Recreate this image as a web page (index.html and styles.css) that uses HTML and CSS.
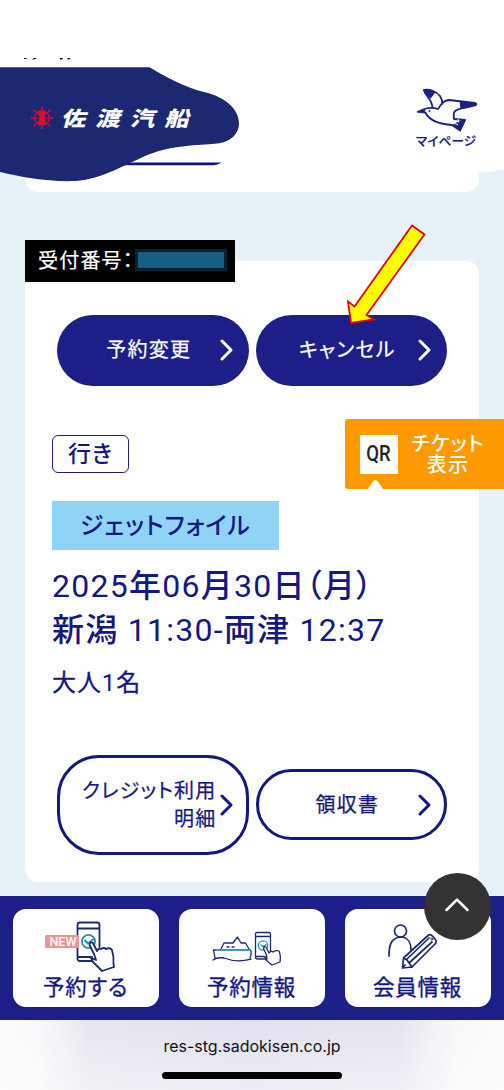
FILE: index.html
```html
<!DOCTYPE html>
<html lang="ja">
<head>
<meta charset="utf-8">
<title>佐渡汽船 予約情報</title>
<link rel="stylesheet" href="styles.css">
</head>
<body>
<div class="page">
  <header class="header">
    <div class="prev-card"></div>
    <svg class="wave" width="504" height="200" viewBox="0 0 504 200">
      <path d="M0 0H504V169.500C495 171 487 172 479 173H0Z" fill="#fff"/>
      <path d="M24 58h3l-1 1h-2zM34 58h3l-3 1.500h-2zM60 58h3l-1 1.500h-2zM67 58h4l-2 1.500h-1z" fill="#111"/>
      <path d="M118 162.400H221.500Q217 165.300 210 165.300H118Z" fill="#101583"/>
      <path d="M0 67.300H149.500C168 78 184 87 204 92C226 97 239 110 239 123C239 135 229 142.500 217 143.500C196 145.500 174 145 150 154C127 163 104 179 75 181C48 182 21 177 0 172Z" fill="#1d2872"/>
    </svg>
    <div class="logo">
      <svg width="22" height="22" viewBox="0 0 22 22" fill="none" stroke="#e5082e">
        <circle cx="11" cy="11" r="7.300" stroke-width="1.300"/>
        <path d="M11 0V22M0 11H22M3.300 3.300L18.700 18.700M18.700 3.300L3.300 18.700" stroke-width=".8"/>
        <path d="M7 4.500H15L13 11L15 17.500H7L9 11Z" fill="#e5082e" stroke-width=".6"/>
        <path d="M3 3l1.500 1.500M17.500 4.500l1.500-1.500M3 19l1.500-1.500M17.500 17.500l1.500 1.500M11 0v2M11 20v2M0 11h2M20 11h2" stroke-width="1.700"/>
      </svg>
      <span class="logo-text">佐渡汽船</span>
    </div>
    <a class="mypage">
      <svg width="62" height="44" viewBox="0 0 62 44" fill="none" stroke="#1c1f87" stroke-width="1.800" stroke-linejoin="round">
        <path d="M10 20.500C14 19.500 18 19.500 22 21C26 15 28 12.500 33 12L59 15C61 15.500 60.500 17 59 17.500C50 20 42 20 39 23C37.500 25 37.500 28 38 31L49 32L44 42.500L36 37C25 36 14 34 9 24"/>
        <path d="M16.500 19.500C16 11 8.500 7 8 2C13 1 20 3 24 8C26 11 26.500 14 26.500 16.500"/>
        <path d="M8 2C12 1 17 2 19 4L14.500 10C11 7 8.500 5 8 2ZM44 13.500L60 15.500C60.500 17 53 19 45 20ZM1 24C4 22 7 21 10 20.500C8.500 22 8.500 23 9 25ZM44 33L49 32L44 42L37 37Z" fill="#1c1f87" stroke-width="1"/>
        <path d="M39 33l4 1M38 35.500l4 1M42 31l1 3" stroke="#fff" stroke-width="1"/>
        <circle cx="13.500" cy="23" r="1" fill="#1c1f87" stroke="none"/>
      </svg>
      <span>マイページ</span>
    </a>
  </header>

  <main class="main">
    <section class="card">
      <div class="receipt"><span>受付番号：</span><i class="mask"></i></div>
      <div class="row row-top">
        <a class="btn solid"><span>予約変更</span><svg class="chev" width="13" height="22" viewBox="0 0 13 22"><path d="M2 2L11 11L2 20"/></svg></a>
        <a class="btn solid"><span>キャンセル</span><svg class="chev" width="13" height="22" viewBox="0 0 13 22"><path d="M2 2L11 11L2 20"/></svg></a>
      </div>
      <div class="direction">行き</div>
      <div class="ship">ジェットフォイル</div>
      <div class="trip">
        <p>2025<b>年</b>06<b>月</b>30<b>日（月）</b></p>
        <p><b>新潟</b> 11:30-<b>両津</b> 12:37</p>
      </div>
      <p class="people"><b>大人</b>1<b>名</b></p>
      <div class="row row-bottom">
        <a class="btn line tall"><span>クレジット利用<br>明細</span><svg class="chev" width="13" height="22" viewBox="0 0 13 22"><path d="M2 2L11 11L2 20"/></svg></a>
        <a class="btn line"><span>領収書</span><svg class="chev" width="13" height="22" viewBox="0 0 13 22"><path d="M2 2L11 11L2 20"/></svg></a>
      </div>
    </section>
  </main>

  <nav class="nav">
    <a class="tab">
      <svg width="146" height="52" viewBox="0 0 146 52" fill="none" stroke="#1c2b6c" stroke-width="1.800" stroke-linejoin="round" stroke-linecap="round">
        <path d="M64.500 38V16Q64.500 13.500 67 13.500H84Q86.500 13.500 86.500 16V38M64.500 19.500H86.500M64.500 27V49.500Q64.500 52 67 52H80M64.500 48H79"/>
        <circle cx="75.500" cy="32.500" r="6.600" stroke="#2492b5"/>
        <path d="M72 31.500l3 3 5-4" stroke="#2492b5" stroke-width="2"/>
        <path d="M83 51L81 45L76.500 36Q77 32 80 34L84 42Q85 39 88 40Q91 38 93 40Q97 38 99 41Q101 47 100.500 55L101 58L89 62L80 53L78 49Z" fill="#fff"/>
        <rect x="32" y="26" width="34" height="13" rx="1.500" fill="#ee9496" stroke="none"/>
        <text x="36.500" y="37" class="new">NEW</text>
      </svg>
      <span>予約する</span>
    </a>
    <a class="tab">
      <svg width="146" height="52" viewBox="0 0 146 52" fill="none" stroke="#1c2b6c" stroke-width="1.300" stroke-linejoin="round" stroke-linecap="round">
        <path d="M34 51Q38 48 45 49Q58 54 72 50M36 49L34.500 41H71.500Q73 44 71 49M42 40L45 34H54L58.500 28L62 34H66.500L70 40M48 38h2M53 38h2"/>
        <path d="M37 41H71" stroke="#35afd2"/>
        <path d="M76.500 43V25Q76.500 23.500 78 23.500H90Q91.500 23.500 91.500 25V43M76.500 27.500H91.500M76.500 42V48Q76.500 50 78.500 50H87M76.500 47.500H86"/>
        <circle cx="84" cy="36.500" r="4.700" stroke="#2492b5"/><path d="M82 36l2 1.500 3-2" stroke="#2492b5"/>
        <path d="M88 50L87.500 46L84.500 39.500Q85 37 87 38L90 44Q92 41 94 43Q97 41 100 42Q102 46 101 53L93 56L87 51L86 48Z" fill="#fff"/>
      </svg>
      <span>予約情報</span>
    </a>
    <a class="tab">
      <svg width="146" height="52" viewBox="0 0 146 52" fill="none" stroke="#1c2b6c" stroke-width="1.700" stroke-linejoin="round" stroke-linecap="round">
        <circle cx="55.500" cy="22" r="6"/>
        <path d="M44 47C44 36 46 29 55.500 28C63 28 66 34 66 41"/>
        <path d="M57.500 59L58.500 49L83 26.500Q85 24.500 88 27.500L90 30Q92.500 33 90 35L67 58ZM58.500 49L62 51L64 54L67 58M61.500 50.500L84 29M64 54L87 33M57.500 59L60 56" fill="#fff"/>
        <circle cx="86.800" cy="30" r="1" stroke-width="1"/>
      </svg>
      <span>会員情報</span>
    </a>
  </nav>

  <footer class="browser">
    <div class="url">res-stg.sadokisen.co.jp</div>
    <div class="home"></div>
  </footer>

  <a class="qr">
    <span class="qr-box"><span>QR</span></span>
    <span class="qr-text">チケット<br>表示</span>
    <svg class="qr-notch" width="15" height="9" viewBox="0 0 15 9"><path d="M0 9L5 1.500Q7.500-1 10 1.500L15 9Z" fill="#fff"/></svg>
  </a>
  <svg class="arrow" width="84" height="106" viewBox="0 0 84 106"><path d="M67 5.500L79.500 14.500L21.500 95L29 99.500L6 103L3 81.500L9.500 86.500Z" fill="#ff0" stroke="#e60012" stroke-width="1.800"/></svg>
  <a class="to-top"><svg width="24" height="14" viewBox="0 0 24 14"><path d="M1.500 12L12 1.700L22.500 12" fill="none" stroke="#fff" stroke-width="2.500" stroke-linecap="round" stroke-linejoin="round"/></svg></a>
</div>
</body>
</html>
```

FILE: styles.css
```css
* { box-sizing: border-box; }
body { margin: 0; }
p { margin: 0; }
b { font-weight: 500; }
.page {
  position: relative;
  display: flex;
  flex-direction: column;
  width: 504px;
  height: 1090px;
  overflow: hidden;
  background: #e7f2f8;
  color: #151883;
  font-family: Roboto, "Noto Sans CJK JP", sans-serif;
  font-feature-settings: "palt";
}
.header {
  position: relative;
  display: flex;
  justify-content: space-between;
  align-items: flex-start;
  height: 192px;
  padding: 88px 26px 0 31px;
}
.prev-card {
  position: absolute;
  left: 25px;
  bottom: 0;
  width: 454px;
  height: 100px;
  background: #fff;
  border-radius: 0 0 13px 13px;
}
.wave { position: absolute; left: 0; top: 0; }
.logo { position: relative; display: flex; align-items: center; gap: 10px; padding-top: 19px; }
.logo-text {
  color: #fff;
  font: 900 21px/22px "Noto Sans CJK JP", sans-serif;
  letter-spacing: 8.500px;
  margin-top: -3px;
  transform: scale(1.17, .98) skewX(-12deg);
  transform-origin: 0 50%;
}
.mypage { position: relative; display: flex; flex-direction: column; width: 62px; font-size: 12.500px; font-weight: 500; line-height: 18px; letter-spacing: .2px; white-space: nowrap; -webkit-text-stroke: .2px; }
.mypage span { margin-top: 1px; }
.main { height: 704px; padding: 69px 25px 0; }
.card {
  position: relative;
  height: 621px;
  padding: 53.500px 31px 0 27px;
  background: #fff;
  border-radius: 0 13px 13px 13px;
}
.receipt {
  position: absolute;
  left: 0;
  top: -21px;
  display: flex;
  align-items: center;
  width: 210px;
  height: 42px;
  padding-left: 13px;
  background: #000;
  color: #fff;
  font-size: 20px;
  letter-spacing: 1.200px;
  -webkit-text-stroke: .2px;
}
.receipt span { width: 97px; white-space: nowrap; line-height: 30px; }
.mask { width: 92px; height: 22px; margin-top: -3px; background: #156082; border: 3px solid #042433; }
.row { display: flex; align-items: center; gap: 7px; padding-left: 5px; }
.btn {
  display: flex;
  align-items: center;
  width: 191.500px;
  height: 71px;
  flex: none;
  padding-right: 16px;
  border-radius: 36px;
  font-size: 20px;
  line-height: 28px;
  letter-spacing: 1.200px;
  text-align: center;
  -webkit-text-stroke: .25px;
}
.btn span { flex: 1; padding-left: 8px; margin-right: -13px; }
.solid { background: #1c1f87; color: #fff; }
.line { border: 3px solid #151883; padding-right: 13px; }
.line span { padding-left: 5px; }
.tall { height: 99.500px; border-radius: 42px; }
.tall span { padding: 0; margin: 0 3px 0 0; text-align: right; white-space: nowrap; }
.btn .chev { flex: none; fill: none; stroke: currentColor; stroke-width: 3; stroke-linecap: round; stroke-linejoin: round; }
.direction {
  width: 77px;
  height: 38px;
  margin-top: 49.500px;
  border: 1.500px solid #1c1f87;
  border-radius: 6px;
  font-size: 23px;
  font-weight: 500;
  line-height: 38px;
  letter-spacing: 1px;
  text-align: center;
}
.ship {
  width: 227px;
  height: 49px;
  margin-top: 28px;
  background: #90d4f5;
  font-size: 24px;
  font-weight: 500;
  line-height: 51px;
  letter-spacing: 1px;
  text-align: center;
}
.trip { margin-top: 14px; font-size: 32px; line-height: 44px; letter-spacing: 1.250px; white-space: nowrap; }
.people { margin-top: 14px; font-size: 24px; line-height: 34px; letter-spacing: .9px; }
.people b { font-weight: 400; -webkit-text-stroke: .3px; }
.row-bottom { margin-top: 55px; }
.nav { display: flex; gap: 20px; height: 124px; padding: 13px; background: #1c1f87; }
.tab {
  display: flex;
  flex-direction: column;
  align-items: center;
  width: 146px;
  height: 98px;
  border-radius: 13px;
  background: #fff;
  font-size: 21.500px;
  letter-spacing: .8px;
}
.tab svg { flex: none; overflow: visible; }
.tab span { margin-top: 11px; line-height: 32px; margin-right: 1px; -webkit-text-stroke: .35px; }
.new { font: 500 12.500px Roboto, sans-serif; letter-spacing: 0; fill: #fff; stroke: none; }
.browser {
  display: flex;
  flex-direction: column;
  align-items: center;
  height: 70px;
  background:
    linear-gradient(180deg, rgba(255,255,255,0) 0, rgba(255,255,255,.4) 100%),
    linear-gradient(90deg, #fbfcfd 0, #f8f8fb 40px, #e6e6f0 90px, #e1e1ee 250px, #e5e5f0 400px, #f8f8fb 455px, #fbfbfd 504px);
}
.url { margin-top: 16px; color: #111; font: 16px/20px Inter, sans-serif; letter-spacing: 0; }
.home { width: 180px; height: 7px; margin-top: auto; margin-bottom: 11px; border-radius: 4px; background: #000; }
.qr {
  position: absolute;
  left: 345px;
  top: 419px;
  display: flex;
  align-items: center;
  gap: 11px;
  width: 159px;
  height: 70px;
  padding-left: 15px;
  background: #f90;
  border-radius: 3px 0 0 3px;
  color: #fff;
}
.qr-box { display: grid; place-items: center; width: 38px; height: 39px; background: #fff; color: #222; font: 500 22px/24px Roboto, sans-serif; }
.qr-box span { transform: scaleX(.84); }
.qr-text { width: 78px; padding-top: 2px; text-align: center; font-size: 20px; font-weight: 500; line-height: 21px; letter-spacing: 1.300px; white-space: nowrap; }
.qr-notch { position: absolute; left: 23px; bottom: 0; }
.arrow { position: absolute; left: 345px; top: 220px; }
.to-top { position: absolute; left: 423.500px; top: 872.500px; display: grid; place-items: center; width: 67px; height: 67px; padding-bottom: 2px; border-radius: 50%; background: #333; }
```
